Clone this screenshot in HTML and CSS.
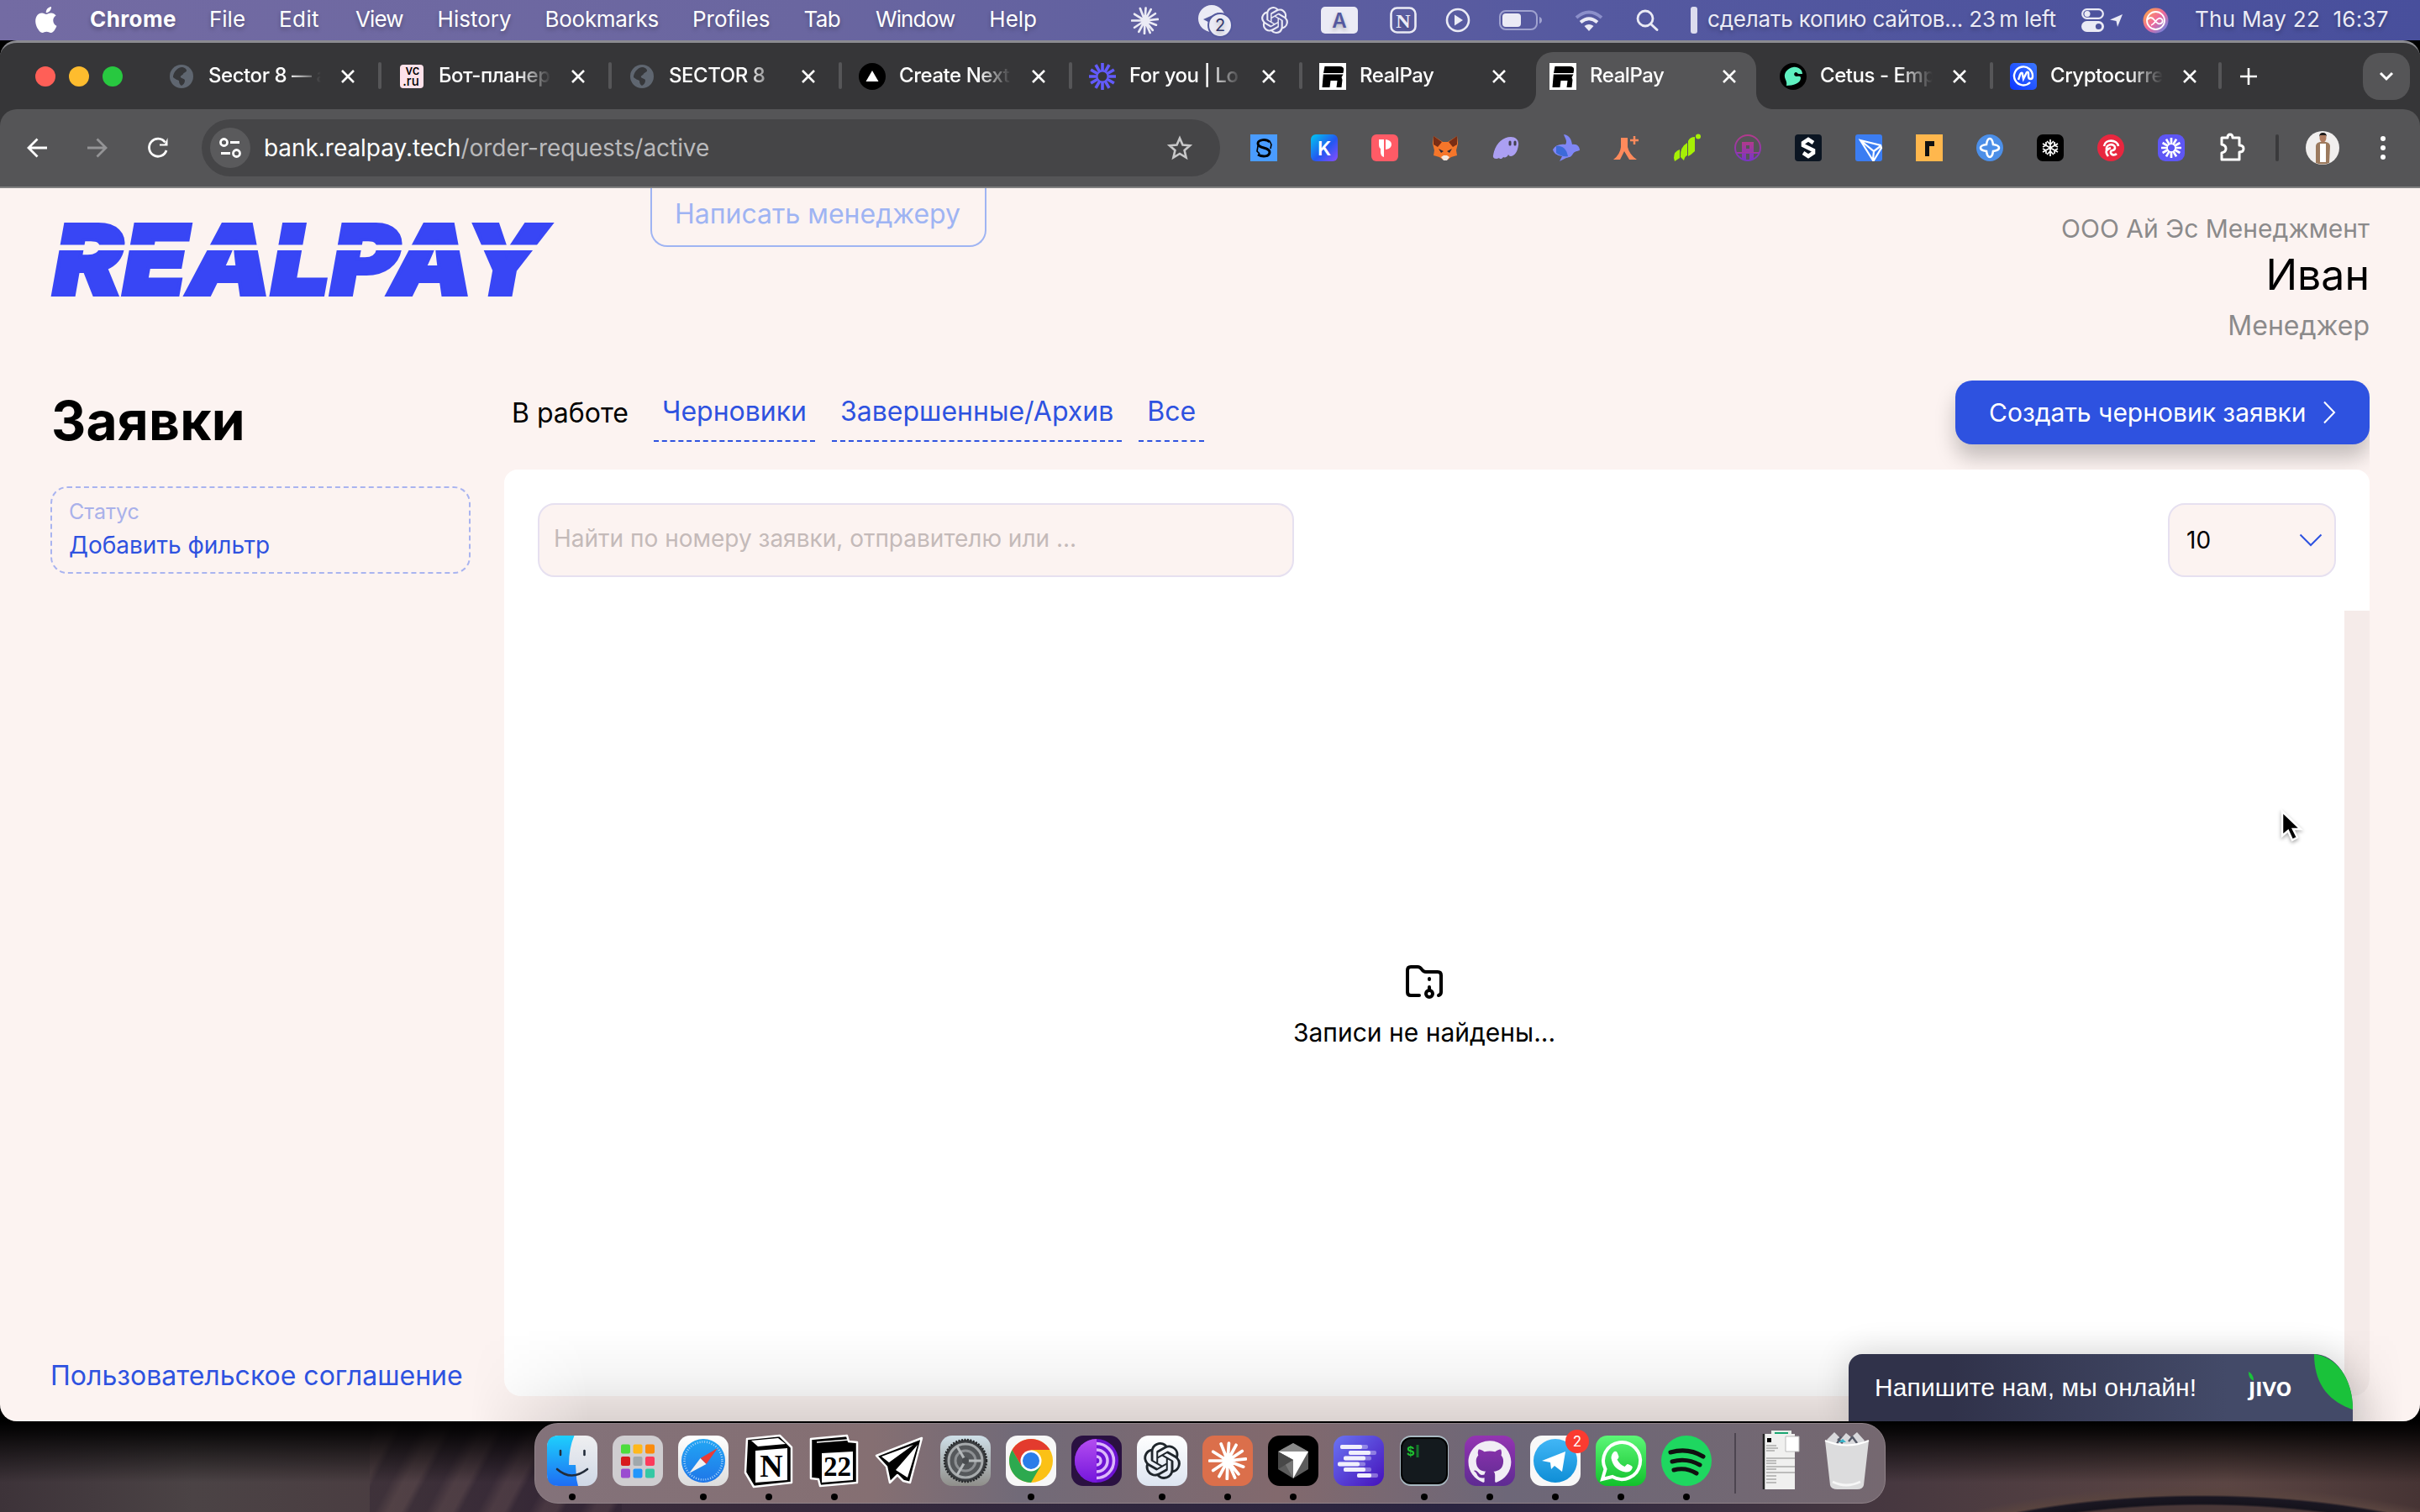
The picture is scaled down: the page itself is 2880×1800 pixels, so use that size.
FILE: index.html
```html
<!DOCTYPE html>
<html lang="ru">
<head>
<meta charset="utf-8">
<title>RealPay</title>
<link rel="stylesheet" href="styles.css">
</head>
<body>
<svg class="defs" aria-hidden="true">
  <defs>
    <symbol id="x" viewBox="0 0 18 18"><path d="M2 2l14 14M16 2L2 16" stroke="#fff" stroke-width="2.6" fill="none"/></symbol>
    <symbol id="globe" viewBox="0 0 32 32"><circle cx="16" cy="16" r="14" fill="#5f6670"/><path d="M16 5c3 0 6 2 6 4s-3 2-4 4-4 2-3 4 5 1 5 4-2 5-4 6c-2-1-3-3-3-6-2-1-5-2-7-4 0-5 4-11 10-12z" fill="#36373a"/></symbol>
    <symbol id="rp" viewBox="0 0 32 32"><path d="M0 0h32v32H0z" fill="#fff"/><path d="M6.500 4H24q6 0 5 5l-.5 3H5zM4.800 13.500H28.500l-2 3.500 1 3-1 9h-6l1-8h-8l-1 8h-9z" fill="#000"/></symbol>
    <symbol id="burst" viewBox="-16 -16 32 32"><g stroke="currentColor" stroke-width="2.600" stroke-linecap="round"><path d="M0 0L1-14.500M0 0L-5.500-14M0 0L7-13M0 0L12-8M0 0L15-1.500M0 0L13 5M0 0L9 11M0 0L6 14M0 0L-.5 15M0 0L-7 13M0 0L-12 8M0 0L-15 0M0 0L-12-7.500"/></g></symbol>
    <symbol id="loom" viewBox="-16 -16 32 32"><g stroke="currentColor" stroke-width="3.600"><path id="ray" d="M0-6V-16"/><use href="#ray" transform="rotate(30)"/><use href="#ray" transform="rotate(60)"/><use href="#ray" transform="rotate(90)"/><use href="#ray" transform="rotate(120)"/><use href="#ray" transform="rotate(150)"/><use href="#ray" transform="rotate(180)"/><use href="#ray" transform="rotate(210)"/><use href="#ray" transform="rotate(240)"/><use href="#ray" transform="rotate(270)"/><use href="#ray" transform="rotate(300)"/><use href="#ray" transform="rotate(330)"/></g><circle r="6.500" fill="none" stroke="currentColor" stroke-width="2"/></symbol>
    <symbol id="knot" viewBox="0 0 24 24"><path fill="currentColor" d="M22.2819 9.8211a5.9847 5.9847 0 0 0-.5157-4.9108 6.0462 6.0462 0 0 0-6.5098-2.9A6.0651 6.0651 0 0 0 4.9807 4.1818a5.9847 5.9847 0 0 0-3.9977 2.9 6.0462 6.0462 0 0 0 .7427 7.0966 5.98 5.98 0 0 0 .511 4.9107 6.051 6.051 0 0 0 6.5146 2.9001A5.9847 5.9847 0 0 0 13.2599 24a6.0557 6.0557 0 0 0 5.7718-4.2058 5.9894 5.9894 0 0 0 3.9977-2.9001 6.0557 6.0557 0 0 0-.7475-7.0729zm-9.022 12.6081a4.4755 4.4755 0 0 1-2.8764-1.0408l.1419-.0804 4.7783-2.7582a.7948.7948 0 0 0 .3927-.6813v-6.7369l2.02 1.1686a.071.071 0 0 1 .038.052v5.5826a4.504 4.504 0 0 1-4.4945 4.4944zm-9.6607-4.1254a4.4708 4.4708 0 0 1-.5346-3.0137l.142.0852 4.783 2.7582a.7712.7712 0 0 0 .7806 0l5.8428-3.3685v2.3324a.0804.0804 0 0 1-.0332.0615L9.74 19.9502a4.4992 4.4992 0 0 1-6.1408-1.6464zM2.3408 7.8956a4.485 4.485 0 0 1 2.3655-1.9728V11.6a.7664.7664 0 0 0 .3879.6765l5.8144 3.3543-2.0201 1.1685a.0757.0757 0 0 1-.071 0l-4.8303-2.7865A4.504 4.504 0 0 1 2.3408 7.872zm16.5963 3.8558L13.1038 8.364 15.1192 7.2a.0757.0757 0 0 1 .071 0l4.8303 2.7913a4.4944 4.4944 0 0 1-.6765 8.1042v-5.6772a.79.79 0 0 0-.407-.667zm2.0107-3.0231l-.142-.0852-4.7735-2.7818a.7759.7759 0 0 0-.7854 0L9.409 9.2297V6.8974a.0662.0662 0 0 1 .0284-.0615l4.8303-2.7866a4.4992 4.4992 0 0 1 6.6802 4.66zM8.3065 12.863l-2.02-1.1638a.0804.0804 0 0 1-.038-.0567V6.0742a4.4992 4.4992 0 0 1 7.3757-3.4537l-.142.0805L8.704 5.459a.7948.7948 0 0 0-.3927.6813zm1.0976-2.3654l2.602-1.4998 2.6069 1.4998v2.9994l-2.5974 1.4997-2.6067-1.4997Z"/></symbol>
    <linearGradient id="gBlue" x1="0" y1="0" x2="0" y2="1"><stop offset="0" stop-color="#1ed0fc"/><stop offset="1" stop-color="#1e6df4"/></linearGradient>
    <linearGradient id="gPale" x1="0" y1="0" x2="0" y2="1"><stop offset="0" stop-color="#efeff1"/><stop offset="1" stop-color="#cfd8e6"/></linearGradient>
    <linearGradient id="gSafari" x1="0" y1="0" x2="0" y2="1"><stop offset="0" stop-color="#22a6f4"/><stop offset="1" stop-color="#1f76e8"/></linearGradient>
    <linearGradient id="gWhite" x1="0" y1="0" x2="0" y2="1"><stop offset="0" stop-color="#fff"/><stop offset="1" stop-color="#dcdcdc"/></linearGradient>
    <linearGradient id="gGear" x1="0" y1="0" x2="0" y2="1"><stop offset="0" stop-color="#cfdfe8"/><stop offset="1" stop-color="#8f8e8a"/></linearGradient>
    <linearGradient id="gTor" x1="0" y1="0" x2="0" y2="1"><stop offset="0" stop-color="#b44df0"/><stop offset="1" stop-color="#7416dc"/></linearGradient>
    <linearGradient id="gGpt" x1="0" y1="0" x2="0" y2="1"><stop offset="0" stop-color="#fff"/><stop offset="1" stop-color="#dde5f1"/></linearGradient>
    <linearGradient id="gList" x1="0" y1="0" x2="1" y2="1"><stop offset="0" stop-color="#6a74f2"/><stop offset="1" stop-color="#4511bb"/></linearGradient>
    <linearGradient id="gGit" x1="0" y1="0" x2="0" y2="1"><stop offset="0" stop-color="#9434b2"/><stop offset="1" stop-color="#5e2b92"/></linearGradient>
    <linearGradient id="gTg" x1="0" y1="0" x2="0" y2="1"><stop offset="0" stop-color="#41b6f6"/><stop offset="1" stop-color="#0f8ed6"/></linearGradient>
    <linearGradient id="gWa" x1="0" y1="0" x2="0" y2="1"><stop offset="0" stop-color="#5cf777"/><stop offset="1" stop-color="#12c12c"/></linearGradient>
    <linearGradient id="gK" x1="0" y1="0" x2="1" y2="1"><stop offset="0" stop-color="#00c8f0"/><stop offset=".55" stop-color="#2457f0"/><stop offset="1" stop-color="#8a4dff"/></linearGradient>
    <linearGradient id="gSiri" x1="0" y1="0" x2="1" y2="1"><stop offset="0" stop-color="#ffb03a"/><stop offset=".5" stop-color="#f0689c"/><stop offset="1" stop-color="#4f8cf0"/></linearGradient>
    <linearGradient id="gCmc" x1="1" y1="0" x2="0" y2="1"><stop offset="0" stop-color="#3c78ff"/><stop offset="1" stop-color="#0c35ff"/></linearGradient>
    <linearGradient id="gPurple" x1="0" y1="0" x2="0" y2="1"><stop offset="0" stop-color="#b23a8c"/><stop offset="1" stop-color="#7a35c4"/></linearGradient>
  </defs>
</svg>

<div class="desktop">
  <header class="menubar">
    <svg class="apple" viewBox="2 0 19.500 24"><path fill="#fff" d="M12.152 6.896c-.948 0-2.415-1.078-3.960-1.040-2.040.027-3.910 1.183-4.961 3.014-2.117 3.675-.546 9.103 1.519 12.090 1.013 1.454 2.208 3.090 3.792 3.039 1.520-.065 2.090-.987 3.935-.987 1.831 0 2.350.987 3.960.948 1.637-.026 2.676-1.480 3.676-2.948 1.156-1.688 1.636-3.325 1.662-3.415-.039-.013-3.182-1.221-3.220-4.857-.026-3.040 2.480-4.494 2.597-4.559-1.429-2.090-3.623-2.324-4.390-2.376-2-.156-3.675 1.090-4.610 1.090zM15.530 3.830c.843-1.012 1.400-2.427 1.245-3.830-1.207.052-2.662.805-3.532 1.818-.780.896-1.454 2.338-1.273 3.714 1.338.104 2.715-.688 3.559-1.701"/></svg>
    <nav class="menus">
      <b class="app">Chrome</b><span class="m-file">File</span><span class="m-edit">Edit</span><span class="m-view">View</span><span class="m-history">History</span><span class="m-bookmarks">Bookmarks</span><span>Profiles</span><span class="m-tab">Tab</span><span class="m-window">Window</span><span class="m-help">Help</span>
    </nav>
    <div class="status">
      <svg width="33" height="33"><use href="#burst"/></svg>
      <svg width="42" height="36" viewBox="0 0 42 36"><circle cx="16" cy="16" r="16" fill="#ebebf5"/><path d="M6 17l18-8-3 16z" fill="#555a9e"/><circle cx="26" cy="24" r="14" fill="#ebebf5" stroke="#555a9e" stroke-width="2"/><text x="26" y="31" font-size="20" text-anchor="middle" fill="#33386e">2</text></svg>
      <svg width="32" height="32"><use href="#knot"/></svg>
      <svg width="44" height="32" viewBox="0 0 44 32"><rect width="44" height="32" rx="5" fill="#ebebf5"/><text x="22" y="24.500" font-size="24" font-weight="600" text-anchor="middle" fill="#54599f">A</text></svg>
      <svg width="32" height="32" viewBox="0 0 32 32"><rect x="1.500" y="1.500" width="29" height="29" rx="7" fill="none" stroke="#ebebf5" stroke-width="2.600"/><text x="16" y="24.500" font-size="24" font-weight="700" font-family="Liberation Serif, serif" text-anchor="middle" fill="#ebebf5">N</text></svg>
      <svg width="30" height="30" viewBox="0 0 30 30"><circle cx="15" cy="15" r="13" fill="none" stroke="#ebebf5" stroke-width="2.600"/><path d="M11 8.500l10 6.500-10 6.500z" fill="#ebebf5"/></svg>
      <svg width="52" height="24" viewBox="0 0 52 24"><rect x="1" y="1" width="44" height="22" rx="7" fill="none" stroke="#9fa2cf" stroke-width="2"/><rect x="4" y="4" width="22" height="16" rx="4" fill="#ebebf5"/><path d="M48 8q3 1 3 4t-3 4z" fill="#9fa2cf"/></svg>
      <svg width="34" height="26" viewBox="0 0 34 26"><path d="M2 10q15-13 30 0" fill="none" stroke="#8b8fca" stroke-width="4"/><path d="M7 15.500q10-8.500 20 0" fill="none" stroke="#ebebf5" stroke-width="4"/><path d="M17 26l-5.500-6q5.500-4 11 0z" fill="#ebebf5"/></svg>
      <svg width="27" height="26" viewBox="0 0 27 26"><circle cx="11" cy="11" r="9" fill="none" stroke="#ebebf5" stroke-width="2.800"/><path d="M17.500 17.500l7.500 7" stroke="#ebebf5" stroke-width="3" stroke-linecap="round"/></svg>
      <i class="bar"></i>
      <span class="timer">сделать копию сайтов... 23&#8201;m left</span>
      <svg width="27" height="28" viewBox="0 0 27 28"><rect x="1.200" y="1.200" width="24.600" height="10.600" rx="5.300" fill="none" stroke="#ebebf5" stroke-width="2.200"/><circle cx="7" cy="6.500" r="3.500" fill="#ebebf5"/><rect y="15" width="27" height="13" rx="6.500" fill="#ebebf5"/><circle cx="20.500" cy="21.500" r="3.600" fill="#50559d"/></svg>
      <svg width="15" height="15" viewBox="0 0 15 15"><path d="M15 0L9 15 7.500 8 0 6.500z" fill="#ebebf5"/></svg>
      <svg width="31" height="31" viewBox="0 0 31 31"><circle cx="15.500" cy="15.500" r="15" fill="url(#gSiri)"/><circle cx="15.500" cy="15.500" r="10.500" fill="none" stroke="#fff" stroke-width="1.800"/><path d="M5 15c3-4 6-4 9 0s6 6 9 3c2-3-1-6-4-5-4 2-5 7-9 8" fill="none" stroke="#fff" stroke-width="1.800"/></svg>
      <span class="clock">Thu May 22&nbsp; 16:37</span>
    </div>
  </header>

  <section class="window">
    <div class="tabstrip">
      <div class="lights"><i class="red"></i><i class="yellow"></i><i class="green"></i></div>
      <div class="tab"><svg class="fav"><use href="#globe"/></svg><span class="title">Sector 8 — a</span><svg class="close"><use href="#x"/></svg></div>
      <div class="tab"><svg class="fav" viewBox="0 0 32 32"><rect x="2" y="2" width="28" height="28" rx="4" fill="#ffe2ea"/><text x="17" y="14" font-size="15" font-weight="500" text-anchor="middle">vc</text><text x="15" y="26.500" font-size="15" font-weight="500" text-anchor="middle">.ru</text></svg><span class="title">Бот-планер</span><svg class="close"><use href="#x"/></svg></div>
      <div class="tab"><svg class="fav"><use href="#globe"/></svg><span class="title">SECTOR 8</span><svg class="close"><use href="#x"/></svg></div>
      <div class="tab"><svg class="fav" viewBox="0 0 32 32"><circle cx="16" cy="16" r="16"/><path d="M16 9l7.500 13h-15z" fill="#fff"/></svg><span class="title">Create Next</span><svg class="close"><use href="#x"/></svg></div>
      <div class="tab"><svg class="fav loom"><use href="#loom"/></svg><span class="title">For you | Lo</span><svg class="close"><use href="#x"/></svg></div>
      <div class="tab nosep"><svg class="fav"><use href="#rp"/></svg><span class="title">RealPay</span><svg class="close"><use href="#x"/></svg></div>
      <div class="tab active"><svg class="fav"><use href="#rp"/></svg><span class="title">RealPay</span><svg class="close"><use href="#x"/></svg></div>
      <div class="tab"><svg class="fav" viewBox="0 0 32 32"><circle cx="16" cy="16" r="16"/><path d="M27 13c0-5-5-9-11-8S5 11 6 17c1 4 3 5 2 10 8 0 17-3 17-9 0-3-3-2-5-2-3 0-4-4-1-5 2 0 2 2 4 2z" fill="#5ff0c0"/></svg><span class="title">Cetus - Emp</span><svg class="close"><use href="#x"/></svg></div>
      <div class="tab last"><svg class="fav" viewBox="0 0 32 32"><rect width="32" height="32" rx="5" fill="url(#gCmc)"/><path d="M24 23a11 11 0 1 1 3-7c0 4-5 4-5 0v-3c0-3-2-3-3 0l-3 6-1-5c0-3-2-3-3 0l-2 6" fill="none" stroke="#fff" stroke-width="2.400"/></svg><span class="title">Cryptocurre</span><svg class="close"><use href="#x"/></svg></div>
      <svg class="plus" viewBox="0 0 22 22"><path d="M11 1v20M1 11h20" stroke="#fff" stroke-width="2.600"/></svg>
      <div class="tabsearch"><svg width="18" height="12" viewBox="0 0 18 12"><path d="M2 2l7 7 7-7" fill="none" stroke="#fff" stroke-width="3"/></svg></div>
    </div>

    <div class="toolbar">
      <svg class="nav" viewBox="0 0 24 24"><path d="M24 12H2M12.500 1.500L2 12l10.500 10.500" fill="none" stroke="#fff" stroke-width="2.800"/></svg>
      <svg class="nav" viewBox="0 0 24 24"><path d="M0 12h22M11.500 1.500L22 12 11.500 22.500" fill="none" stroke="#949496" stroke-width="2.800"/></svg>
      <svg class="nav" viewBox="0 0 24 24"><path d="M20.500 5.500A10.500 10.500 0 1 0 22 15" fill="none" stroke="#fff" stroke-width="2.800"/><path d="M23.500 0v9.500H14V7.500h6z" fill="#fff"/></svg>
      <div class="omnibox">
        <span class="site"><svg width="26" height="24" viewBox="0 0 26 24"><g fill="none" stroke="#fff" stroke-width="2.800"><circle cx="5.500" cy="5.500" r="4"/><path d="M13 5.500h11M2 18.500h11"/><circle cx="20.500" cy="18.500" r="4"/></g></svg></span>
        <span class="url">bank.realpay.tech<em>/order-requests/active</em></span>
        <svg class="star" viewBox="0 0 30 30"><path d="M15 3.500l3.500 8 8.600.8-6.500 5.700 2 8.500L15 22l-7.600 4.500 2-8.500L2.900 12.300l8.600-.8z" fill="none" stroke="#c8c8c9" stroke-width="2.600"/></svg>
      </div>
      <div class="exts">
        <svg viewBox="0 0 32 32"><path d="M0 0h32v32H0z" fill="#4a9cff"/><path d="M23 9C19 5 9 6 9 11c0 6 14 4 14 10 0 6-9 6-14 3" fill="none" stroke="#000" stroke-width="3"/><path d="M9 14l-1 6 3 3M24 17l1-5-2-4" fill="none" stroke="#000" stroke-width="1.600"/></svg>
        <svg viewBox="0 0 32 32"><rect width="32" height="32" rx="6" fill="url(#gK)"/><text x="16" y="24.500" font-size="23" font-weight="600" text-anchor="middle" fill="#fff">K</text></svg>
        <svg viewBox="0 0 32 32"><rect width="32" height="32" rx="6" fill="#ff5b66"/><path d="M9 6h6v21q-4-1-4-6v-4q-2-1-2-5zM17 6q7 1 7 6t-7 6z" fill="#fff"/></svg>
        <svg viewBox="0 0 32 32"><path d="M2 2l11 7h6l11-7 1 9-2 8 1 6-7 2-4 3h-6l-4-3-7-2 1-6-2-8z" fill="#f5762a"/><path d="M2 2l10 7-5 6-5-3zM30 2L20 9l5 6 5-3z" fill="#7a2d14"/><path d="M8 17l6 3-3 2zM24 17l-6 3 3 2z" fill="#2b2b3c"/><path d="M11 27l3-2h4l3 2-3 4h-4z" fill="#f1e6de"/></svg>
        <svg viewBox="0 0 32 32"><path d="M1 25C3 12 12 3 22 3c6 0 10 4 9 10-1 8-5 13-9 13-2 0-2-1-3-2-1 3-4 4-6 3-1 2-4 3-5 1-3 2-8 1-7-3z" fill="#ab9ff2"/><path d="M21 9v3M27 9v3" stroke="#43404f" stroke-width="3" stroke-linecap="round"/></svg>
        <svg viewBox="0 0 32 32"><path d="M13 0c7 1 9 6 10 12 6-1 9 3 9 7-3 1-6 1-8 4-2 4-4 4-8 5l-8 4 3-6C4 25 1 22 0 18c3-5 8-7 15-6 3-4-1-8-2-12z" fill="#7f86f5"/><path d="M4 14c6-1 12 2 14 12-5 1-10-1-14-4z" fill="#3c6ad8"/></svg>
        <svg viewBox="0 0 32 32"><path d="M9 4h8v11q2 9 11 15h-9l-6-10-5 10H0q8-6 9-15z" fill="#ff8a5c"/><path d="M25 2v10M20 7h10" stroke="#ff8a5c" stroke-width="2.500"/></svg>
        <svg viewBox="0 0 32 32"><path d="M0 28q0-8 7-10v10l-6 4zM8 27q-1-12 8-17v15q-3 1-4 6zM17 26V8q2-5 8-5v17q-4 4-8 6z" fill="#a6f005"/><circle cx="29" cy="2.500" r="3" fill="#a6f005"/></svg>
        <svg viewBox="0 0 32 32"><circle cx="16" cy="16" r="15" fill="none" stroke="url(#gPurple)" stroke-width="2"/><path d="M9 30V9h14v21h-5V22h-4v8zM14 13v4h4v-4z" fill="url(#gPurple)" fill-rule="evenodd"/><path d="M3 21h26v2H3z" fill="url(#gPurple)"/></svg>
        <svg viewBox="0 0 32 32"><rect width="32" height="32" rx="4" fill="#0b1522"/><path d="M22 10l-6-4-6 4v3l12 6v3l-6 4-6-4" fill="none" stroke="#fff" stroke-width="4.600"/></svg>
        <svg viewBox="0 0 32 32"><rect width="32" height="32" rx="3" fill="#3b7df2"/><path d="M6 7l24 6 1 3-9 15-1 0zM6 7l16 13 8-6M22 20l-1 10" fill="none" stroke="#fff" stroke-width="2.200"/></svg>
        <svg viewBox="0 0 32 32"><path d="M0 0h32v32H0z" fill="#ffb74d"/><path d="M11 8h11v6h-6v12h-5z" fill="#111"/></svg>
        <svg viewBox="0 0 32 32"><circle cx="16" cy="16" r="16" fill="#4c8fe8"/><path d="M16 5q3 0 4 7 7 1 7 4t-7 4q-1 7-4 7t-4-7q-7-1-7-4t7-4q1-7 4-7z" fill="none" stroke="#fff" stroke-width="2.600"/></svg>
        <svg viewBox="0 0 32 32"><rect width="32" height="32" rx="7"/><path d="M16 6v20M7 11l18 10M25 11L7 21M12 8l4 4 4-4M12 24l4-4 4 4M7 15l4-2V9M25 15l-4-2V9M7 17l4 2v4M25 17l-4 2v4" stroke="#fff" stroke-width="1.700" fill="none"/></svg>
        <svg viewBox="0 0 32 32"><circle cx="16" cy="16" r="16" fill="#e8273f"/><path d="M8 14c1-9 16-8 17 0M11 19c-2-8 10-9 10-3 0 5-6 1-5 6 1 3 5 3 7 1M13 26c-4-5-3-8 3-10" fill="none" stroke="#fff" stroke-width="2.600"/></svg>
        <svg viewBox="0 0 32 32"><rect width="32" height="32" rx="9" fill="#5e56f5"/><g color="#fff"><use href="#loom" x="4" y="4" width="24" height="24"/></g></svg>
        <svg viewBox="0 0 32 32"><path d="M4 4h7q0-4 3-4t3 4h8v9q5 0 5 4t-5 4v9H4v-8q5-1 5-5t-5-5z" fill="none" stroke="#fff" stroke-width="3" stroke-linejoin="round"/></svg>
      </div>
      <i class="divider"></i>
      <svg class="avatar" viewBox="0 0 40 40"><circle cx="20" cy="20" r="20" fill="#f1efee"/><path d="M12 38V18q0-4 5-5h7q5 1 5 5l-1 20q-8 3-16 0z" fill="#9b7a5e"/><path d="M17 15h7v22h-7z" fill="#fff"/><ellipse cx="20.500" cy="8" rx="4" ry="5.500" fill="#b07c60"/><path d="M16 7q0-5 4.500-5T25 7l-1-2h-7z" fill="#1d1a1a"/></svg>
      <svg class="kebab" viewBox="0 0 8 28"><g fill="#fff"><circle cx="4" cy="3" r="3"/><circle cx="4" cy="14" r="3"/><circle cx="4" cy="25" r="3"/></g></svg>
    </div>

    <main class="page">
      <header class="top">
        <svg class="logo" viewBox="0 0 600 90"><text x="3" y="87" textLength="586" lengthAdjust="spacingAndGlyphs">REALPAY</text><path d="M0 27.500h600v6.500H0z" fill="#fcf3f1"/></svg>
        <button class="write"><span>Написать менеджеру</span></button>
        <div class="user">
          <span>ООО Ай Эс Менеджмент</span>
          <span class="name">Иван</span>
          <span class="role">Менеджер</span>
        </div>
      </header>
      <div class="columns">
        <aside class="side">
          <h1>Заявки</h1>
          <div class="filter"><span class="label">Статус</span><span>Добавить фильтр</span></div>
          <a class="terms">Пользовательское соглашение</a>
        </aside>
        <section class="content">
          <div class="row">
            <nav class="filters">
              <span class="current">В работе</span>
              <a>Черновики</a>
              <a>Завершенные/Архив</a>
              <a>Все</a>
            </nav>
            <button class="create"><span>Создать черновик заявки</span><svg width="16" height="28" viewBox="0 0 16 28"><path d="M2 1.500L14 14 2 26.500" fill="none" stroke="#fff" stroke-width="2"/></svg></button>
          </div>
          <div class="panel">
            <div class="controls">
              <div class="search">Найти по номеру заявки, отправителю или ...</div>
              <div class="select"><span>10</span><svg width="28" height="16" viewBox="0 0 28 16"><path d="M1.500 1.500L14 14 26.500 1.500" fill="none" stroke="#2e52e0" stroke-width="2"/></svg></div>
            </div>
            <div class="list">
              <div class="empty">
                <svg width="44" height="40" viewBox="0 0 44 40"><g fill="none" stroke="#000" stroke-width="4" stroke-linecap="round" stroke-linejoin="round"><path d="M16 36H6q-4 0-4-4V6q0-4 4-4h8q3 0 5 3t5 3h14q4 0 4 4v20q0 3-3 4M28 16v1M28 26v3"/><circle cx="28" cy="34" r="4"/></g></svg>
                <span>Записи не найдены...</span>
              </div>
              <i class="track"></i>
            </div>
          </div>
        </section>
      </div>
      <i class="shade"></i>
      <div class="jivo">
        <span class="say">Напишите нам, мы онлайн!</span>
        <span class="brand">ȷıvo</span>
        <svg class="sprout" viewBox="0 0 8 14"><path d="M0 0q8 4 8 14Q0 11 0 0z" fill="#1ac23a"/></svg>
        <svg class="leaf" viewBox="0 0 46 66"><path d="M0 0C28 4 46 30 46 66 16 56 0 34 0 0z" fill="#1ac23a"/></svg>
      </div>
      <svg class="pointer" viewBox="0 0 28 40"><path d="M3 2v29l7-6 5 11 6-3-5-10h9z" fill="#000" stroke="#fff" stroke-width="2.500"/></svg>
    </main>
  </section>

  <footer class="dock">
    <svg viewBox="0 0 60 60"><rect width="60" height="60" rx="14" fill="url(#gPale)"/><path d="M32.500 0H14Q0 0 0 14v32q0 14 14 14h23q-2.500-8-2.500-17.500l-.5-7.500h-8q0-20 6.500-35z" fill="url(#gBlue)"/><path d="M16 18v5M44.500 18v5M12 40q17 15 36 0" stroke="#222c3a" stroke-width="2.600" fill="none" stroke-linecap="round"/><circle cx="30" cy="73" r="4"/></svg>
    <svg viewBox="0 0 60 60"><rect width="60" height="60" rx="14" fill="#cfcdd0"/><g><rect x="10" y="10.500" width="11" height="11" rx="2" fill="#4ddc3c"/><rect x="24.500" y="10.500" width="11" height="11" rx="2" fill="#ffb81c"/><rect x="39" y="10.500" width="11" height="11" rx="2" fill="#fb8b0c"/><rect x="10" y="25" width="11" height="11" rx="2" fill="#d81a1e"/><rect x="24.500" y="25" width="11" height="11" rx="2" fill="#a0a8ac"/><rect x="39" y="25" width="11" height="11" rx="2" fill="#fc3b5c"/><rect x="10" y="39.500" width="11" height="11" rx="2" fill="#9a4bd0"/><rect x="24.500" y="39.500" width="11" height="11" rx="2" fill="#2196fb"/><rect x="39" y="39.500" width="11" height="11" rx="2" fill="#35c8a4"/></g></svg>
    <svg viewBox="0 0 60 60"><rect width="60" height="60" rx="14" fill="url(#gWhite)"/><circle cx="30" cy="30" r="26" fill="url(#gSafari)"/><circle cx="30" cy="30" r="22.500" fill="none" stroke="#a9d3f8" stroke-width="2.500" stroke-dasharray="1 1.880"/><path d="M47 15L33.500 34 26.500 27z" fill="#ea3b36"/><path d="M13 45l13.500-18 7 7z" fill="#f1f1f1"/><circle cx="30" cy="73" r="4"/></svg>
    <svg viewBox="0 0 60 60"><path d="M4 4l39-4 14 14v42L12 61 2 44z" fill="#000" stroke="#fff" stroke-width="2.500" stroke-linejoin="round"/><path d="M9 6l32-3 9 7-33 3zM14 18l38-3v38l-38 3z" fill="#fff"/><text x="33" y="49" font-size="38" font-weight="700" font-family="Liberation Serif, serif" text-anchor="middle">N</text><circle cx="30" cy="73" r="4"/></svg>
    <svg viewBox="0 0 60 60"><path d="M2 4l43-4 2 7 10 1v48l-44 4-2-8-9-1z" fill="#000" stroke="#fff" stroke-width="2.500" stroke-linejoin="round"/><path d="M9 8l38-3" stroke="#fff" stroke-width="1.500"/><path d="M15 21l37-2v34l-37 3z" fill="#fff"/><text x="33.500" y="48" font-size="33" font-weight="700" font-family="Liberation Serif, serif" text-anchor="middle">22</text><circle cx="30" cy="73" r="4"/></svg>
    <svg viewBox="0 0 60 60"><path d="M2 24L56 3l-14 53-8-2-7-7-9 9-4-19z" fill="#000" stroke="#fff" stroke-width="2.500" stroke-linejoin="round"/><path d="M8 25L46 11 17 32zM51 11L39 50l-14-9z" fill="#fff"/></svg>
    <svg viewBox="0 0 60 60"><rect width="60" height="60" rx="14" fill="url(#gGear)"/><circle cx="30" cy="30" r="25" fill="#3b3e41" stroke="#26282a" stroke-width="2.500" stroke-dasharray="2 1.500"/><circle cx="30" cy="30" r="20" fill="#55585b" stroke="#a7abad" stroke-width="3"/><circle cx="30" cy="30" r="12" fill="none" stroke="#8d9093" stroke-width="3"/><path d="M30 30H49M30 30L20 13M30 30L20 47" stroke="#b5b9bb" stroke-width="3"/><circle cx="30" cy="30" r="4" fill="#4a4d50"/></svg>
    <svg viewBox="0 0 60 60"><rect width="60" height="60" rx="14" fill="#f7f7f7"/><circle cx="30" cy="30" r="26" fill="#fbc116"/><path d="M7.500 17A26 26 0 0 1 52.500 17H30L18.700 36.500z" fill="#e33b2e"/><path d="M7.500 17A26 26 0 0 0 30 56L41.300 36.500H18.700z" fill="#2da94f"/><circle cx="30" cy="30" r="12.500" fill="#fff"/><circle cx="30" cy="30" r="10" fill="#2b7de9"/><circle cx="30" cy="73" r="4"/></svg>
    <svg viewBox="0 0 60 60"><rect width="60" height="60" rx="14" fill="#2a1141"/><circle cx="30" cy="30" r="26" fill="#6d13d3"/><path d="M30 4a26 26 0 0 0 0 52z" fill="url(#gTor)"/><path d="M30 9.500a20.500 20.500 0 0 1 0 41M30 17a13 13 0 0 1 0 26M30 25a5 5 0 0 1 0 10" fill="none" stroke="#dcb8fa" stroke-width="3.500"/></svg>
    <svg viewBox="0 0 60 60"><rect width="60" height="60" rx="14" fill="url(#gGpt)"/><g color="#1f262c"><use href="#knot" x="8" y="8" width="44" height="44"/></g><circle cx="30" cy="73" r="4"/></svg>
    <svg viewBox="0 0 60 60"><rect width="60" height="60" rx="14" fill="#db6f4b"/><g color="#fff"><use href="#burst" x="7" y="7" width="46" height="46"/></g><circle cx="30" cy="73" r="4"/></svg>
    <svg viewBox="0 0 60 60"><rect width="60" height="60" rx="14"/><path d="M30 9l18 10v21L30 51 12 40V19z" fill="#5c5c5c"/><path d="M12 19L30 9l18 10z" fill="#8a8a8a"/><path d="M12 19h36L30 51V29z" fill="#fff"/><path d="M12 19l18 10v22z" fill="#777"/><path d="M12 19v21l18-11z" fill="#484848"/><circle cx="30" cy="73" r="4"/></svg>
    <svg viewBox="0 0 60 60"><rect width="60" height="60" rx="14" fill="url(#gList)"/><g fill="#fff" fill-opacity=".35"><rect x="8" y="11" width="33" height="5" rx="2"/><rect x="18" y="18" width="33" height="5" rx="2"/><rect x="12" y="24.500" width="33" height="5" rx="2"/><rect x="5" y="31.500" width="33" height="5" rx="2"/><rect x="12" y="38" width="33" height="5" rx="2"/><rect x="28" y="45" width="25" height="5" rx="2"/></g><g fill="#f0effc"><rect x="8" y="11" width="26" height="5" rx="2"/><rect x="18" y="18" width="26" height="5" rx="2"/><rect x="12" y="24.500" width="26" height="5" rx="2"/><rect x="5" y="31.500" width="26" height="5" rx="2"/><rect x="12" y="38" width="26" height="5" rx="2"/><rect x="28" y="45" width="17" height="5" rx="2"/></g></svg>
    <svg viewBox="0 0 60 60"><rect x="1" width="58" height="60" rx="13" fill="#a9b9c2"/><rect x="3" y="3" width="54" height="54" rx="11" fill="#141a1e" stroke="#000" stroke-width="2"/><text x="9" y="24" font-size="16" font-weight="700" font-family="Liberation Mono, monospace" fill="#1fc431">$</text><path d="M22 11v15" stroke="#14772a" stroke-width="3"/><circle cx="30" cy="73" r="4"/></svg>
    <svg viewBox="0 0 60 60"><rect width="60" height="60" rx="14" fill="url(#gGit)"/><path transform="translate(4.500 5.500) scale(2.120)" fill="#f1edf5" d="M12 .297c-6.630 0-12 5.373-12 12 0 5.303 3.438 9.800 8.205 11.385.6.113.82-.258.82-.577 0-.285-.010-1.040-.015-2.040-3.338.724-4.042-1.610-4.042-1.610C4.422 18.070 3.633 17.700 3.633 17.700c-1.087-.744.084-.729.084-.729 1.205.084 1.838 1.236 1.838 1.236 1.070 1.835 2.809 1.305 3.495.998.108-.776.417-1.305.76-1.605-2.665-.3-5.466-1.332-5.466-5.930 0-1.310.465-2.380 1.235-3.220-.135-.303-.54-1.523.105-3.176 0 0 1.005-.322 3.300 1.230.96-.267 1.980-.399 3-.405 1.020.006 2.040.138 3 .405 2.280-1.552 3.285-1.230 3.285-1.230.645 1.653.24 2.873.12 3.176.765.84 1.230 1.910 1.230 3.220 0 4.610-2.805 5.625-5.475 5.920.42.36.81 1.096.81 2.220 0 1.606-.015 2.896-.015 3.286 0 .315.210.69.825.57C20.565 22.092 24 17.592 24 12.297c0-6.627-5.373-12-12-12"/><circle cx="30" cy="73" r="4"/></svg>
    <svg viewBox="0 0 60 60"><rect width="60" height="60" rx="14" fill="#f8f8f8"/><circle cx="30" cy="30" r="26" fill="url(#gTg)"/><path d="M14 30l28-11-4 24-9-7-4 4-1-8z" fill="#fff"/><circle cx="56" cy="7" r="14" fill="#fb3b30"/><text x="56" y="13" font-size="17" text-anchor="middle" fill="#fff">2</text><circle cx="30" cy="73" r="4"/></svg>
    <svg viewBox="0 0 60 60"><rect width="60" height="60" rx="14" fill="url(#gWa)"/><path d="M8 52l3.500-12A22 22 0 1 1 20 49z" fill="none" stroke="#fff" stroke-width="4"/><path d="M22 19q3-1 4 2l1.500 4q0 2-2 3.500 3 6 9 8.500l3-3q1-.5 5 2 2 1 1 3-2 5-8 4.500Q21 41 18.500 27q0-5 3.500-8z" fill="#fff"/><circle cx="30" cy="73" r="4"/></svg>
    <svg viewBox="0 0 60 60"><circle cx="30" cy="30" r="30" fill="#1ed760"/><path d="M11 20q21-6 39 5M13 31q17-5 33 4M15 41q14-4 27 4" fill="none" stroke="#101010" stroke-width="5" stroke-linecap="round"/><circle cx="30" cy="73" r="4"/></svg>
    <i class="sep"></i>
    <svg class="docs" viewBox="0 0 44 70"><path d="M10 0h24v10H10z" fill="#e6efe9"/><path d="M14 2h16v6H14z" fill="#1aa672"/><path d="M0 4h38v66H0z" fill="#f0f0ef"/><path d="M1 4v66" stroke="#222" stroke-width="2.500"/><path d="M5 9h5v5H5z"/><path d="M4 18h12M4 21h14M4 24h10M4 33h34M4 43h34M4 50h34M4 36h12M4 39h12M4 46h12M4 54h12M4 58h12M4 62h12" stroke="#888" stroke-width="1.200"/><path d="M27 7h16v18H27z" fill="#fff" stroke="#bbb"/></svg>
    <svg class="trash" viewBox="0 0 54 70"><path d="M3 10l9-9 8 8 6-7 6 5 7-6 9 10-4 6H8z" fill="#d9d9dc"/><path d="M16 9l6 5M20 6l-5 9M33 6l6 8M29 12l5-6" stroke="#565a68" stroke-width="2.500"/><path d="M17 13l5-4 4 4z" fill="#39b3c9"/><path d="M1 11q26 11 52 0l-6 53q-1 5-8 5H16q-8 0-9-5z" fill="#dcdcdd"/><path d="M1 11q26 11 52 0" fill="none" stroke="#fff" stroke-width="2"/><path d="M10 60q16 8 33 0" fill="none" stroke="#f6f6f6" stroke-width="3"/></svg>
  </footer>
</div>
</body>
</html>
```
FILE: styles.css
```css
* { box-sizing: border-box; }
body { margin: 0; font-family: Inter, "Noto Sans", sans-serif; }
svg { display: block; flex: none; overflow: visible; font-family: Inter, "Noto Sans", sans-serif; }
i { display: block; flex: none; }
.defs { position: absolute; width: 0; height: 0; }

.desktop {
  width: 2880px; height: 1800px; overflow: hidden;
  display: flex; flex-direction: column;
  background:
    linear-gradient(#000 1692px, rgba(0, 0, 0, .85) 1705px, rgba(0, 0, 0, 0) 1765px),
    radial-gradient(ellipse 420px 130px at 2620px 1907px, #4a3838 88%, #15131c 90%, #1a1722 96%, #59443f 98%, rgba(80, 62, 60, 0) 106%),
    repeating-linear-gradient(118deg, rgba(96, 74, 78, .35) 0 14px, rgba(40, 28, 44, .35) 22px 40px, rgba(96, 74, 78, .35) 54px) 440px 0 / 300px 1800px no-repeat,
    linear-gradient(90deg, #3d3339, #4b4345 8%, #4a3d41 16%, #3a2b3a 24%, #2a2440 60%, #4a3a40 80%, #5b4543 92%, #463434);
}

/* Menu bar */
.menubar {
  height: 48px; flex: none; display: flex; align-items: flex-start;
  background: linear-gradient(90deg, #736ba3, #6a66a0 33%, #5559a0 66%, #484f9c);
  color: #fff; font-size: 26px; line-height: 46px;
  text-shadow: 0 3px 5px rgba(0, 0, 0, .25);
}
.apple { width: 27px; height: 31px; margin: 8px 0 0 41px; }
.menus { display: flex; gap: 40px; width: 1239px; margin-left: 39px; white-space: nowrap; }
.app { letter-spacing: .4px; }
.m-file { margin-left: -1px; }
.m-edit { letter-spacing: .4px; }
.m-view { margin-left: 3px; letter-spacing: -.9px; }
.m-history { margin-left: 1px; }
.m-bookmarks { letter-spacing: -.3px; }
.m-tab { letter-spacing: -.7px; }
.m-window { margin-left: 2px; letter-spacing: -.86px; }
.m-help { margin-left: 1px; }
.status {
  display: grid; height: 48px; align-items: center; color: #ebebf5; white-space: nowrap;
  grid-template-columns: 80px 75px 71px 82px 66px 64px 90px 73px 65px 21px 444px 34px 39px 63px 230px;
}
.status span { height: 48px; }
.bar { width: 8px; height: 32px; border-radius: 3px; background: #dcdcee; }
.timer { margin-left: -1px; letter-spacing: -.2px; }
.clock { margin-left: -1px; letter-spacing: .3px; }

/* Browser window */
.window {
  height: 1644px; flex: none; border-radius: 20px; overflow: hidden;
  border-top: 3px solid #8b8b90; background: #363638;
  display: flex; flex-direction: column;
}
.tabstrip { height: 79px; flex: none; display: flex; align-items: center; padding-top: 1px; }
.lights { display: flex; gap: 16px; padding-left: 42px; width: 178px; }
.lights i { width: 24px; height: 24px; border-radius: 50%; }
.red { background: #ff5f57; }
.yellow { background: #febc2e; }
.green { background: #28c840; }
.tab { width: 274px; height: 78px; flex: none; display: flex; align-items: center; padding-left: 22px; position: relative; }
.tab::after { content: ""; position: absolute; right: -2px; top: 22px; width: 4px; height: 32px; border-radius: 2px; background: #565658; }
.tab.nosep::after { display: none; }
.tab.last { width: 272px; }
.fav { width: 32px; height: 32px; }
.loom { color: #635bff; }
.title {
  width: 134px; height: 40px; margin: -2px 0 0 16px; overflow: hidden; white-space: nowrap;
  font-size: 24px; font-weight: 500; line-height: 40px; letter-spacing: -.45px; color: #fff;
  -webkit-mask-image: linear-gradient(90deg, #000 70%, transparent); mask-image: linear-gradient(90deg, #000 70%, transparent);
}
.close { width: 18px; height: 18px; margin-left: 23px; }
.active::before {
  content: ""; position: absolute; left: 6px; top: 10px; width: 262px; height: 68px;
  background: #555557; border-radius: 20px 20px 0 0;
}
.active::after {
  left: -14px; right: auto; top: 58px; width: 302px; height: 20px; border-radius: 0;
  background:
    radial-gradient(circle at 0 0, rgba(85, 85, 87, 0) 19.5px, #555557 20.5px) left / 20px 20px no-repeat,
    radial-gradient(circle at 100% 0, rgba(85, 85, 87, 0) 19.5px, #555557 20.5px) right / 20px 20px no-repeat;
}
.active > * { position: relative; }
.plus { width: 22px; height: 22px; margin-left: 23px; }
.tabsearch { width: 56px; height: 56px; margin: 0 12px 0 auto; border-radius: 20px; background: #555557; display: grid; place-items: center; }

.toolbar {
  height: 94px; flex: none; display: flex; align-items: center; padding: 0 40px 0 32px;
  background: #555557; border-bottom: 2px solid #7f7f80; border-radius: 20px 20px 0 0;
}
.nav { width: 24px; height: 24px; margin-right: 48px; }
.nav + .nav + .nav { margin-right: 40px; }
.omnibox { width: 1212px; height: 68px; border-radius: 34px; background: #454547; display: flex; align-items: center; padding-left: 10px; }
.site { width: 48px; height: 48px; border-radius: 50%; background: #5a5a5c; display: grid; place-items: center; }
.url { margin-left: 16px; color: #fff; font-size: 28px; letter-spacing: -.05px; }
.url em { font-style: normal; color: #b9b9bb; }
.star { width: 30px; height: 30px; margin: 0 33px 0 auto; }
.exts { display: flex; gap: 40px; margin-left: 36px; }
.exts svg { width: 32px; height: 32px; }
.divider { width: 4px; height: 32px; margin-left: 36px; border-radius: 2px; background: #3a3a3c; }
.avatar { width: 40px; height: 40px; margin-left: 32px; }
.kebab { width: 8px; height: 28px; margin-left: 48px; }

/* Page */
.page { height: 1468px; flex: none; position: relative; overflow: hidden; padding: 0 60px; background: #fcf3f1; color: #000; }
button { font: inherit; margin: 0; }
.top { height: 229px; display: flex; align-items: flex-start; }
.logo { width: 600px; height: 90px; margin-top: 40px; overflow: hidden; }
.logo text { font-size: 116px; font-weight: 900; font-style: italic; fill: #3846f5; stroke: #3846f5; stroke-width: 4px; }
.write {
  width: 400px; height: 70px; margin-left: 114px; padding: 0 2px 7px 0; border: 2px solid #9fb4f3; border-top: 0;
  border-radius: 0 0 20px 20px; background: none; color: #9fb4f3; font-size: 32px; white-space: nowrap;
}
.user { margin-left: auto; display: flex; flex-direction: column; align-items: flex-end; padding-top: 29px; color: #8b8a8b; font-size: 30px; line-height: 38px; }
.user .name { margin-top: 1px; color: #000; font-size: 50px; line-height: 70px; }
.user .role { margin-top: 7px; font-size: 32px; line-height: 38px; }

.columns { height: 1239px; display: grid; grid-template-columns: 540px 2220px; }
.side { display: flex; flex-direction: column; align-items: flex-start; padding-bottom: 29px; }
h1 { margin: 0 0 0 1px; height: 126px; font-size: 64px; line-height: 96px; font-weight: 700; letter-spacing: .2px; }
.filter {
  width: 500px; height: 104px; padding: 9px 20px; border: 2px dashed #a9b4f0; border-radius: 20px;
  display: flex; flex-direction: column; color: #2e52e0; font-size: 28px; line-height: 42px;
}
.filter .label { color: #a9b1ea; font-size: 25px; line-height: 38px; }
.terms { margin-top: auto; color: #2e52e0; font-size: 32px; line-height: 50px; }

.content { overflow: hidden; }
.row { height: 106px; display: flex; justify-content: space-between; align-items: flex-start; }
.filters { display: flex; gap: 20px; padding: 12px 0 0 9px; font-size: 32px; line-height: 50px; white-space: nowrap; }
.current { margin-right: 10px; padding-top: 2px; }
.filters a { color: #2e52e0; padding: 0 10px; height: 61px; border-bottom: 2px dashed #2e52e0; }
.create {
  width: 493px; height: 76px; border: 0; border-radius: 20px; background: #2e52e0; color: #fff; font-size: 30px;
  display: flex; align-items: center; padding: 0 40px; justify-content: space-between; white-space: nowrap;
  box-shadow: 0 16px 24px rgba(0, 0, 0, .22);
}
.panel { height: 1103px; background: #fff; border-radius: 16px 16px 20px 20px; overflow: hidden; position: relative; }
.controls { height: 168px; padding: 40px; display: flex; justify-content: space-between; }
.search, .select { height: 88px; border: 2px solid #e6e0f0; border-radius: 20px; background: #fcf3f1; display: flex; align-items: center; font-size: 28px; }
.search { width: 900px; padding: 0 0 4px 17px; color: #c4bab9; }
.select { width: 200px; padding: 0 14px 0 20px; justify-content: space-between; }
.list { height: 935px; display: flex; }
.empty { flex: 1; display: flex; flex-direction: column; align-items: center; padding-top: 422px; font-size: 30px; }
.empty span { margin-top: 22px; }
.track { width: 30px; background: #f5ebe9; }

.shade {
  position: absolute; left: 560px; right: 20px; bottom: 0; height: 110px;
  background: linear-gradient(rgba(0, 0, 0, 0), rgba(0, 0, 0, .04) 50%, rgba(0, 0, 0, .13));
  -webkit-mask-image: linear-gradient(90deg, transparent, #000 140px, #000 2230px, transparent);
  mask-image: linear-gradient(90deg, transparent, #000 140px, #000 2230px, transparent);
}
.jivo {
  position: absolute; left: 2200px; bottom: 0; width: 600px; height: 80px; display: flex; align-items: center; padding-left: 31px;
  background: linear-gradient(90deg, #30324a 20%, #434a68 75%); border-radius: 16px 46px 0 0 / 16px 66px 0 0; color: #fff;
  box-shadow: 0 0 40px rgba(0, 0, 0, .16);
}
.say { font: 30px "Liberation Sans", Arial, sans-serif; letter-spacing: .1px; white-space: nowrap; }
.brand { position: absolute; left: 476px; top: 16px; font: 700 32px/44px Lato, sans-serif; }
.sprout { position: absolute; left: 475px; top: 21px; width: 8px; height: 11px; }
.leaf { position: absolute; right: 0; top: 0; width: 46px; height: 66px; }
.pointer { position: absolute; left: 2713px; top: 740px; width: 28px; height: 40px; filter: drop-shadow(0 2px 2px rgba(0, 0, 0, .35)); }

/* Dock */
.dock {
  width: 1608px; height: 96px; flex: none; align-self: center; margin-top: 2px; padding: 14px 12px 0 14px; display: flex; gap: 18px;
  border: 1px solid #8f8288; border-radius: 28px; background: linear-gradient(90deg, #83727a, #856f72 25%, #716a78 36%, #82696d 55%, #6d6778 72%, #756870);
}
.dock > svg { width: 60px; height: 60px; }
.dock .sep { width: 2px; height: 72px; margin: -3px 14px 0 9px; background: #4d4550; }
.dock > .docs { width: 44px; height: 70px; margin-top: -6px; }
.dock > .trash { width: 54px; height: 70px; margin: -5px 0 0 11px; }
```
